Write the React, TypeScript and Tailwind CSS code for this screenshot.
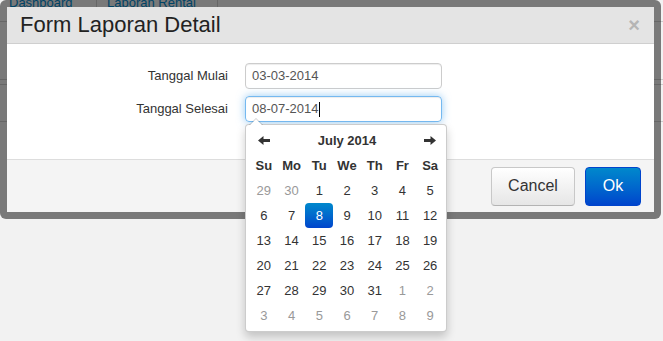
import React from 'react';

type Day = { d: number; muted?: boolean; active?: boolean };

const weeks: Day[][] = [
  [{ d: 29, muted: true }, { d: 30, muted: true }, { d: 1 }, { d: 2 }, { d: 3 }, { d: 4 }, { d: 5 }],
  [{ d: 6 }, { d: 7 }, { d: 8, active: true }, { d: 9 }, { d: 10 }, { d: 11 }, { d: 12 }],
  [{ d: 13 }, { d: 14 }, { d: 15 }, { d: 16 }, { d: 17 }, { d: 18 }, { d: 19 }],
  [{ d: 20 }, { d: 21 }, { d: 22 }, { d: 23 }, { d: 24 }, { d: 25 }, { d: 26 }],
  [{ d: 27 }, { d: 28 }, { d: 29 }, { d: 30 }, { d: 31 }, { d: 1, muted: true }, { d: 2, muted: true }],
  [3, 4, 5, 6, 7, 8, 9].map((d) => ({ d, muted: true })),
];

const dayNames = ['Su', 'Mo', 'Tu', 'We', 'Th', 'Fr', 'Sa'];

function Arrow({ flip }: { flip?: boolean }) {
  return (
    <svg width="12" height="9" viewBox="0 0 12 9" className={flip ? 'rotate-180' : ''}>
      <path d="M0 4.5 L5.5 0 V3 H12 V6 H5.5 V9 Z" fill="#333" />
    </svg>
  );
}

function DatePicker() {
  return (
    <div className="absolute left-[245px] top-[124px] w-[202px] bg-white border border-black/20 rounded-[4px] shadow-[0_5px_10px_rgba(0,0,0,0.2)] pl-[4px] pr-[2px] pt-[3px] pb-[3px]">
      {/* caret */}
      <div className="absolute -top-[7px] left-[3px] w-0 h-0 border-x-[7px] border-x-transparent border-b-[7px] border-b-black/20" />
      <div className="absolute -top-[6px] left-[4px] w-0 h-0 border-x-[6px] border-x-transparent border-b-[6px] border-b-white" />

      <div className="grid grid-cols-7 text-[13px] text-[#333]">
        <div className="h-[25px] flex items-center justify-center">
          <Arrow />
        </div>
        <div className="col-span-5 h-[25px] flex items-center justify-center font-bold">July 2014</div>
        <div className="h-[25px] flex items-center justify-center">
          <Arrow flip />
        </div>

        {dayNames.map((n) => (
          <div key={n} className="h-[25px] flex items-center justify-center font-bold">
            {n}
          </div>
        ))}

        {weeks.flat().map((day, i) => (
          <div
            key={i}
            className={
              day.active
                ? 'h-[25px] flex items-center justify-center rounded-[4px] bg-gradient-to-b from-[#0088cc] to-[#0044cc] text-white'
                : `h-[25px] flex items-center justify-center ${day.muted ? 'text-[#999]' : 'text-[#333]'}`
            }
          >
            {day.d}
          </div>
        ))}
      </div>
    </div>
  );
}

export default function App() {
  return (
    <div className="relative w-[663px] h-[341px] overflow-hidden bg-[#f2f2f2] font-['Liberation_Sans',Arial,sans-serif]">
      {/* page behind the modal */}
      <div className="flex flex-col">
        <div className="-mt-[5px] h-[27px] flex items-start border-b border-[#ccc] text-[13px] leading-[16px] text-[#08c]">
          <div className="w-[97px] h-full pl-[9px] border-r border-[#ccc]">Dashboard</div>
          <div className="w-[121px] h-full pl-[10px] border-r border-[#ccc]">Laporan Rental</div>
        </div>
        <div className="h-[58px] border-b border-[#ccc]" />
        <div className="h-[5px] border-b border-[#ccc]" />
        <div className="h-[37px] border-b border-[#ccc]" />
      </div>

      {/* modal */}
      <div className="absolute left-0 top-0 w-[661px] h-[219px] border-[7px] border-black/50 bg-clip-padding rounded-[6px] flex flex-col bg-white">
        <div className="h-[37px] shrink-0 bg-[#e4e4e4] border-b border-[#cfcfcf] flex items-center justify-between pl-[13px] pr-[14px]">
          <h3 className="text-[22px] leading-[36px] text-[#222]">Form Laporan Detail</h3>
          <span className="text-[20px] font-bold leading-none text-[#b5b5b5]">×</span>
        </div>

        <div className="h-[115px] shrink-0 pt-[19px] flex flex-col gap-[7px] text-[13px]">
          <div className="flex items-center">
            <label className="w-[221px] text-right text-[#333]">Tanggal Mulai</label>
            <div className="ml-[17px] w-[197px] h-[26px] border border-[#ccc] rounded-[4px] px-[6px] flex items-center text-[#555] shadow-[inset_0_1px_1px_rgba(0,0,0,0.075)]">
              03-03-2014
            </div>
          </div>
          <div className="flex items-center">
            <label className="w-[221px] text-right text-[#333]">Tanggal Selesai</label>
            <div className="ml-[17px] w-[197px] h-[26px] border border-[rgba(82,168,236,0.8)] rounded-[4px] px-[6px] flex items-center text-[#555] shadow-[inset_0_1px_1px_rgba(0,0,0,0.075),0_0_8px_rgba(82,168,236,0.6)]">
              08-07-2014
              <span className="inline-block w-px h-[15px] bg-black" />
            </div>
          </div>
        </div>

        <div className="flex-1 bg-[#f4f4f4] border-t border-[#ddd] flex items-center justify-end gap-[10px] pr-[13px]">
          <button className="w-[84px] h-[39px] rounded-[4px] border border-[#c8c8c8] border-b-[#b3b3b3] bg-gradient-to-b from-white to-[#e6e6e6] text-[16px] text-[#333] shadow-[inset_0_1px_0_rgba(255,255,255,0.2)]">
            Cancel
          </button>
          <button className="w-[56px] h-[39px] rounded-[4px] border border-[#0044cc] bg-gradient-to-b from-[#0088cc] to-[#0044cc] text-[16px] text-white">
            Ok
          </button>
        </div>
      </div>

      <DatePicker />
    </div>
  );
}
